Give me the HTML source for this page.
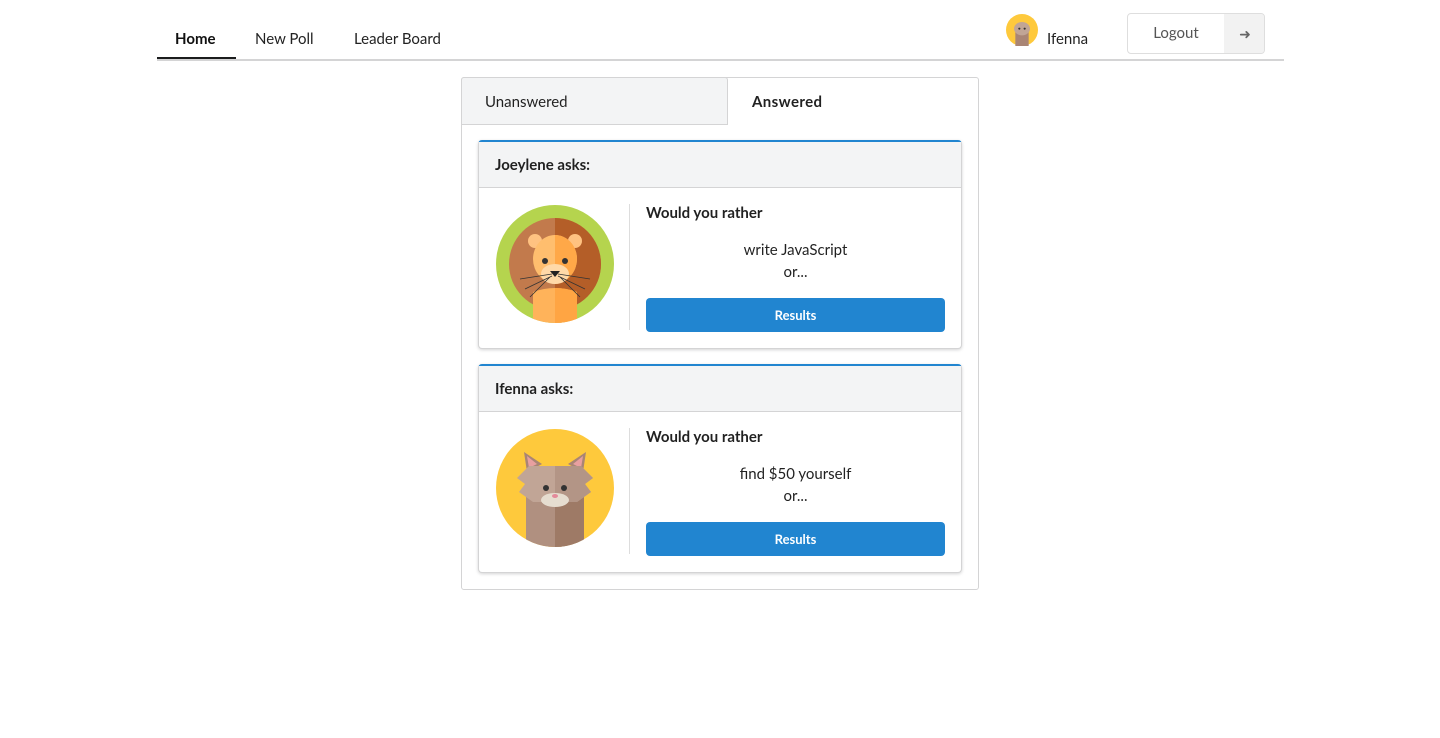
<!DOCTYPE html>
<html><head><meta charset="utf-8"><style>
*{box-sizing:border-box;margin:0;padding:0}
body{width:1440px;height:738px;background:#fff;font-family:"Lato","Liberation Sans",sans-serif;color:rgba(0,0,0,.87);position:relative;overflow:hidden}
.abs{position:absolute}
.nav{left:157px;top:0;width:1127px;height:61px;border-bottom:2px solid #d4d4d5}
.nav a{position:absolute;top:30px;font-size:15px;color:#222}
.logout{left:1127px;top:13px;width:138px;height:41px;border:1px solid #dedede;border-radius:4px;overflow:hidden;background:#fff}
.card{left:461px;top:77px;width:518px;height:513px;border:1px solid #d4d4d5;border-radius:3px}
.q{left:478px;width:484px;height:209px;border:1px solid #d4d4d5;border-top:2px solid #2185d0;border-radius:4px;box-shadow:0 1px 3px #d4d4d5;background:#fff}
.qh{height:46px;background:#f3f4f5;border-bottom:1px solid #d4d4d5;font-weight:bold;font-size:15px;padding:14px 16px}
.div{position:absolute;left:150px;top:62px;width:1px;height:126px;background:#ddd}
.wyr{position:absolute;left:167px;top:62px;font-weight:bold;font-size:15px}
.opt{position:absolute;left:167px;width:299px;text-align:center;font-size:15px;line-height:22px;top:97px}
.btn{position:absolute;left:167px;top:156px;width:299px;height:34px;background:#2185d0;border-radius:4px;color:#fff;font-weight:bold;font-size:13px;text-align:center;line-height:34px}
.av{position:absolute;left:16px;top:62px}
</style></head><body>
<div class="abs nav">
<a style="left:18px;font-weight:bold;color:#111">Home</a>
<div class="abs" style="left:0;top:57px;width:79px;height:2px;background:#1b1c1d"></div>
<a style="left:98px">New Poll</a>
<a style="left:197px">Leader Board</a>
</div>
<svg class="abs" style="left:1006px;top:14px" width="32" height="32" viewBox="0 0 120 120"><circle cx="60" cy="60" r="60" fill="#fec93c"/><rect x="35" y="55" width="50" height="65" fill="#a98575"/><ellipse cx="60" cy="55" rx="30" ry="25" fill="#c1a596"/><circle cx="50" cy="55" r="4" fill="#333"/><circle cx="70" cy="55" r="4" fill="#333"/></svg>
<div class="abs" style="left:1047px;top:30px;font-size:15px">Ifenna</div>
<div class="abs logout"><div class="abs" style="left:0;top:0;width:96px;height:39px;text-align:center;line-height:39px;font-size:15px;color:#555">Logout</div><div class="abs" style="left:96px;top:0;width:42px;height:39px;background:#f2f2f2;text-align:center;line-height:39px;color:#666;font-size:14px">&#10140;</div></div>
<div class="abs card"></div>
<div class="abs" style="left:461px;top:77px;width:267px;height:48px;background:#f3f4f5;border:1px solid #d4d4d5;border-radius:3px 3px 0 0;padding:15px 23px;font-size:15px">Unanswered</div>
<div class="abs" style="left:752px;top:93px;font-size:15px;font-weight:bold;letter-spacing:.4px">Answered</div>
<div class="abs q" style="top:140px"><div class="qh">Joeylene asks:</div>
<svg class="av" width="120" height="120" viewBox="0 0 120 120"><defs><clipPath id="c1"><circle cx="60" cy="60" r="59"/></clipPath></defs><circle cx="60" cy="60" r="59" fill="#b5d44e"/><circle cx="60" cy="60" r="46" fill="#c27a4c"/><path d="M60 14a46 46 0 0 1 0 92z" fill="#b45e28"/><g clip-path="url(#c1)"><path d="M38 88q22-8 44 0v40H38z" fill="#ffb35a"/><path d="M60 84q12 0 22 4v40H60z" fill="#ffa543"/></g><circle cx="40" cy="37" r="7" fill="#ffc281"/><circle cx="80" cy="37" r="7" fill="#ffc281"/><ellipse cx="60" cy="55" rx="22" ry="24" fill="#ffbe6e"/><path d="M60 31a22 24 0 0 1 0 48z" fill="#ffa848"/><ellipse cx="60" cy="70" rx="14" ry="10" fill="#ffd9a8"/><circle cx="50" cy="57" r="3" fill="#333"/><circle cx="70" cy="57" r="3" fill="#333"/><path d="M55 67h10l-5 6z" fill="#222"/><path d="M57 70L25 75M57 72L30 85M55 73L35 93M63 70L95 75M63 72L90 85M65 73L85 93" stroke="#333" stroke-width=".8"/></svg>
<div class="div"></div><div class="wyr">Would you rather</div><div class="opt">write JavaScript<br>or...</div><div class="btn">Results</div></div>
<div class="abs q" style="top:364px"><div class="qh">Ifenna asks:</div>
<svg class="av" width="120" height="120" viewBox="0 0 120 120"><defs><clipPath id="c2"><circle cx="60" cy="60" r="59"/></clipPath></defs><circle cx="60" cy="60" r="59" fill="#fec93c"/><g clip-path="url(#c2)"><rect x="31" y="60" width="58" height="65" fill="#b09080"/><rect x="60" y="60" width="29" height="65" fill="#9e7a66"/></g><path d="M32 44l-3-20 18 12zM88 44l3-20-18 12z" fill="#a98575"/><path d="M34 40l-2-12 10 8zM86 40l2-12-10 8z" fill="#e8a0a0"/><path d="M22 50l12-12h52l12 12-8 6 6 8-14 10H38L24 64l6-8z" fill="#c1a596"/><path d="M60 38h26l12 12-8 6 6 8-14 10H60z" fill="#b39586"/><circle cx="51" cy="60" r="3" fill="#333"/><circle cx="69" cy="60" r="3" fill="#333"/><ellipse cx="60" cy="72" rx="14" ry="7" fill="#e6ddd0"/><ellipse cx="60" cy="68" rx="3" ry="2" fill="#e38a9a"/></svg>
<div class="div"></div><div class="wyr">Would you rather</div><div class="opt">find $50 yourself<br>or...</div><div class="btn">Results</div></div>
</body></html>
